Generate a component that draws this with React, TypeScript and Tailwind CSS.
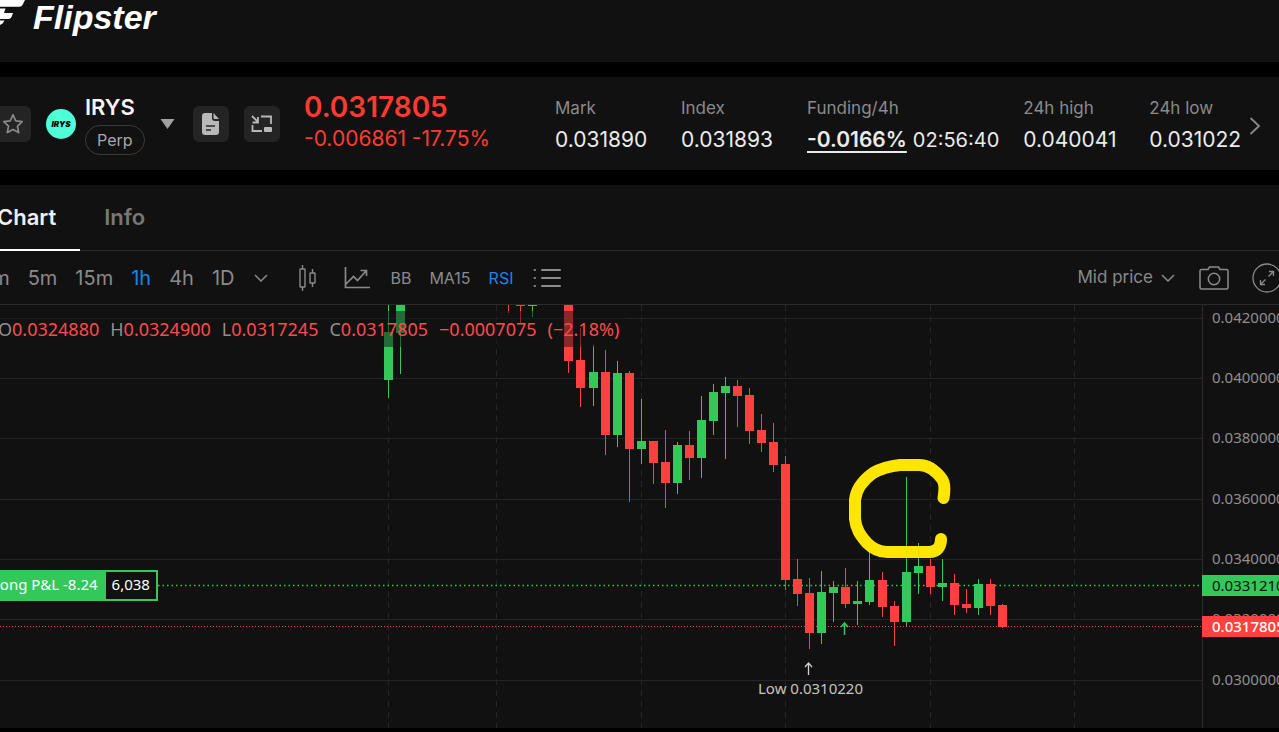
import React, { useState } from 'react'

type Candle = {
  x: number
  open: number
  close: number
  high: number
  low: number
  up: boolean
}

const GREEN = '#34c759'
const RED = '#ff4040'

// [x, body top, body bottom, wick top, wick bottom, up]
const rawCandles: [number, number, number, number, number, number][] = [
  [384, 27, 75, 0, 93, 1],
  [396, 0, 28, 0, 69, 1],
  [504, 0, 0, 0, 8, 0],
  [516, 0, 1, 0, 18, 0],
  [528, 0, 1, 0, 12, 1],
  [564, 0, 56, 0, 68, 0],
  [576, 55, 83, 23, 102, 0],
  [589, 67, 83, 40, 101, 1],
  [601, 67, 130, 45, 150, 0],
  [613, 68, 130, 56, 142, 1],
  [625, 68, 144, 66, 197, 0],
  [637, 136, 144, 94, 159, 1],
  [649, 136, 158, 136, 179, 0],
  [661, 157, 178, 125, 203, 0],
  [673, 140, 178, 137, 189, 1],
  [685, 140, 153, 126, 175, 0],
  [697, 115, 153, 91, 173, 1],
  [709, 87, 116, 79, 130, 1],
  [721, 81, 88, 72, 154, 1],
  [733, 81, 91, 75, 122, 0],
  [745, 90, 126, 83, 139, 0],
  [757, 125, 138, 109, 147, 0],
  [769, 137, 160, 118, 167, 0],
  [781, 159, 275, 151, 285, 0],
  [793, 274, 289, 254, 301, 0],
  [805, 288, 328, 273, 344, 0],
  [817, 287, 328, 266, 339, 1],
  [829, 282, 288, 276, 317, 1],
  [841, 282, 299, 263, 303, 0],
  [853, 296, 299, 276, 320, 1],
  [865, 275, 297, 247, 300, 1],
  [878, 275, 302, 267, 312, 0],
  [890, 301, 317, 296, 341, 0],
  [902, 267, 317, 172, 321, 1],
  [914, 261, 268, 238, 289, 1],
  [926, 261, 282, 254, 289, 0],
  [938, 278, 282, 254, 296, 1],
  [950, 278, 300, 269, 310, 0],
  [962, 299, 303, 284, 308, 0],
  [974, 279, 303, 274, 310, 1],
  [986, 279, 301, 274, 310, 0],
  [998, 300, 322, 299, 323, 0],
]

const candles: Candle[] = rawCandles.map(([x, open, close, high, low, up]) => ({
  x,
  open,
  close,
  high,
  low,
  up: up === 1,
}))

const priceLevels = [
  { y: 13, label: '0.0420000' },
  { y: 73, label: '0.0400000' },
  { y: 133, label: '0.0380000' },
  { y: 194, label: '0.0360000' },
  { y: 254, label: '0.0340000' },
  { y: 314, label: '0.0320000' },
  { y: 375, label: '0.0300000' },
]

const timeLines = [388, 496, 641, 785, 930, 1074]

const intervals = ['1m', '5m', '15m', '1h', '4h', '1D']

const ohlc = [
  { key: 'O', value: '0.0324880' },
  { key: 'H', value: '0.0324900' },
  { key: 'L', value: '0.0317245' },
  { key: 'C', value: '0.0317805' },
]

const Logo: React.FC = () => (
  <a href="#" aria-label="Flipster" className="flex items-start text-white">
    <svg width="26" height="28" viewBox="0 0 26 28" fill="currentColor" aria-hidden="true">
      <path d="M0 0H25L22.500 5Q21.500 6.700 19.500 6.700H0Z" />
      <path d="M0 8.500H5.500L4 13H13L11.500 17Q10.500 19 8.500 19H0Z" />
      <path d="M0 20.500H4.500L2.500 23.500L0 25Z" />
    </svg>
    <span className="pl-[7px] font-['Liberation_Sans',sans-serif] text-[34px] leading-[34px] font-bold italic">Flipster</span>
  </a>
)

const Stat: React.FC<{ label: string; children: React.ReactNode }> = ({ label, children }) => (
  <div className="min-w-[102px] shrink-0 pt-1">
    <dt className="text-[17px] leading-6 text-[#8a8a8a]">{label}</dt>
    <dd className="flex items-baseline gap-1.5 pt-1 text-[21px] leading-8 text-[#ebebeb]">{children}</dd>
  </div>
)

const ChevronDown: React.FC = () => (
  <svg width="14" height="8" viewBox="0 0 14 8" fill="none" stroke="currentColor" strokeWidth="1.500" aria-hidden="true">
    <path d="M1 1l6 6 6-6" />
  </svg>
)

const PairHeader: React.FC = () => (
  <section className="relative flex h-[93px] items-center overflow-hidden bg-[#111] pl-[46px]">
    <button aria-label="Favorite" className="absolute top-[29px] -left-[5px] flex size-9 items-center justify-center rounded-md bg-[#242424] text-[#8a8a8a]">
      <svg width="22" height="22" viewBox="0 0 22 22" fill="none" stroke="currentColor" strokeWidth="1.700" strokeLinejoin="round" aria-hidden="true">
        <path d="M11 1.800l2.800 6 6.400.8-4.700 4.500 1.200 6.500L11 16.400l-5.700 3.200 1.200-6.500L1.800 8.600l6.400-.8z" />
      </svg>
    </button>
    <span className="flex size-[30px] shrink-0 items-center justify-center rounded-full bg-[#4fffd5] text-[8px] font-black text-black italic">IRYS</span>
    <div className="ml-[9px] flex w-[67px] shrink-0 flex-col items-start">
      <h1 className="text-[22px] leading-7 font-semibold text-[#f5f5f5]">IRYS</h1>
      <span className="mt-1 rounded-full border border-[#3a3a3a] px-[11px] text-base leading-7 text-[#a8a8a8]">Perp</span>
    </div>
    <button aria-label="Select market" className="ml-2 text-[#a0a0a0]">
      <svg width="15" height="10" viewBox="0 0 15 10" fill="currentColor" aria-hidden="true">
        <path d="M0.500 0H14.500L7.500 10Z" />
      </svg>
    </button>
    <button aria-label="Contract details" className="ml-[18px] flex size-9 shrink-0 items-center justify-center rounded-md bg-[#242424] text-[#b8b8b8]">
      <svg width="18" height="22" viewBox="0 0 18 22" aria-hidden="true">
        <path d="M3 0h7v5q0 3 3 3h4v11q0 3-3 3H3q-3 0-3-3V3Q0 0 3 0z" fill="currentColor" />
        <path d="M11.500 0L17 6h-4q-1.500 0-1.500-1.500z" fill="currentColor" />
        <path d="M4 13h9M4 17h5" stroke="#242424" strokeWidth="1.500" />
      </svg>
    </button>
    <button aria-label="Picture in picture" className="ml-[15px] flex size-9 shrink-0 items-center justify-center rounded-md bg-[#242424] text-[#b8b8b8]">
      <svg width="22" height="18" viewBox="0 0 22 18" fill="none" stroke="currentColor" strokeWidth="1.800" aria-hidden="true">
        <path d="M10 1.500H20V9M1.500 10v6H11M1 1l6 6M7 2v5.500H1.500" />
        <rect x="13" y="12" width="8" height="5" rx="1" fill="currentColor" stroke="none" />
      </svg>
    </button>
    <div className="ml-6 w-[251px] shrink-0 text-[#ff3b30]">
      <div className="text-[28px] leading-8 font-semibold">0.0317805</div>
      <div className="pb-px text-[21px] leading-8">-0.006861 -17.75%</div>
    </div>
    <dl className="flex min-w-0 grow gap-6">
      <Stat label="Mark">0.031890</Stat>
      <Stat label="Index">0.031893</Stat>
      <Stat label="Funding/4h">
        <span className="font-semibold underline decoration-2 underline-offset-4">-0.0166%</span>
        <span className="text-xl leading-8">02:56:40</span>
      </Stat>
      <Stat label="24h high">0.040041</Stat>
      <Stat label="24h low">0.031022</Stat>
    </dl>
    <button aria-label="More stats" className="absolute top-10 right-[18px] text-[#8a8a8a]">
      <svg width="12" height="18" viewBox="0 0 12 18" fill="none" stroke="currentColor" strokeWidth="1.800" aria-hidden="true">
        <path d="M1.500 1l8.500 8-8.500 8" />
      </svg>
    </button>
  </section>
)

const Toolbar: React.FC = () => {
  const [interval, setSelected] = useState('1h')

  return (
    <div className="flex h-[54px] items-center overflow-hidden border-b border-[#2a2a2a] text-[#8a8a8a]">
      <div className="-ml-4 flex shrink-0 gap-[18px] text-xl">
        {intervals.map((item) => (
          <button key={item} onClick={() => setSelected(item)} className={item === interval ? 'text-[#1a84f0]' : 'text-[#8a8a8a]'}>
            {item}
          </button>
        ))}
      </div>
      <button aria-label="More intervals" className="ml-5">
        <ChevronDown />
      </button>
      <button aria-label="Chart type" className="ml-[30px]">
        <svg width="18" height="26" viewBox="0 0 18 26" fill="none" stroke="currentColor" strokeWidth="1.400" aria-hidden="true">
          <path d="M4.500 0v4M4.500 22v4M14.500 4v4M14.500 18v4" />
          <rect x="2" y="4" width="5" height="18" rx="0.500" />
          <rect x="12" y="8" width="5" height="10" rx="0.500" />
        </svg>
      </button>
      <button aria-label="Indicators" className="ml-7">
        <svg width="26" height="22" viewBox="0 0 26 22" fill="none" stroke="currentColor" strokeWidth="1.700" aria-hidden="true">
          <path d="M1.500 0v20.500H26M2 17l7.500-7.500 4 4L22 4M16.500 3.500H22.500V9" />
        </svg>
      </button>
      <div className="ml-5 flex shrink-0 gap-[18px] text-base">
        <button>BB</button>
        <button>MA15</button>
        <button className="text-[#1a84f0]">RSI</button>
      </div>
      <button aria-label="Indicator list" className="ml-5">
        <svg width="28" height="20" viewBox="0 0 28 20" fill="none" stroke="currentColor" strokeWidth="2" strokeLinecap="round" aria-hidden="true">
          <path d="M9 2h18M9 10h18M9 18h18M1.500 2h.5M1.500 10h.5M1.500 18h.5" />
        </svg>
      </button>
      <button className="ml-auto flex shrink-0 items-center gap-2 text-[17px]">
        Mid price
        <ChevronDown />
      </button>
      <button aria-label="Screenshot" className="ml-6 shrink-0">
        <svg width="30" height="24" viewBox="0 0 30 24" fill="none" stroke="currentColor" strokeWidth="1.500" aria-hidden="true">
          <path d="M2.500 3.500H9L10.500 1H19.500L21 3.500H27.500Q29 3.500 29 5V21.500Q29 23 27.500 23H2.500Q1 23 1 21.500V5Q1 3.500 2.500 3.500Z" />
          <circle cx="15" cy="13" r="5.700" />
        </svg>
      </button>
      <button aria-label="Fullscreen" className="-mr-[3px] ml-[23px] shrink-0">
        <svg width="30" height="30" viewBox="0 0 30 30" fill="none" stroke="currentColor" strokeWidth="1.300" aria-hidden="true">
          <circle cx="15" cy="15" r="14" />
          <path d="M16.500 13.500L21.500 8.500M17 8.500h4.500V13M13.500 16.500L8.500 21.500M8.500 17v4.500H13" />
        </svg>
      </button>
    </div>
  )
}

const CandleChart: React.FC = () => (
  <svg width="100%" height="423" className="block" role="img" aria-label="IRYS 1h candles">
    <g stroke="#242424">
      {priceLevels.map((level) => (
        <line key={level.y} x1="0" x2="100%" y1={level.y + 0.5} y2={level.y + 0.5} />
      ))}
    </g>
    <g stroke="#252525" strokeDasharray="6 5">
      {timeLines.map((x) => (
        <line key={x} x1={x + 0.5} x2={x + 0.5} y1="0" y2="100%" />
      ))}
    </g>
    <line x1="158" x2="100%" y1="280.500" y2="280.500" stroke={GREEN} strokeWidth="1.500" strokeDasharray="1.500 3" />
    <line x1="0" x2="100%" y1="321.500" y2="321.500" stroke="#d9484e" strokeDasharray="1 2" />
    <g shapeRendering="crispEdges">
      {candles.map((c) => (
        <g key={c.x} fill={c.up ? GREEN : RED}>
          <rect x={c.x + 4} y={c.high} width="1" height={c.low - c.high} />
          <rect x={c.x} y={c.open} width="9" height={c.close - c.open} />
        </g>
      ))}
    </g>
    <rect x="0" y="6" width="626" height="36" fill="#111" opacity="0.500" />
    <path d="M844.500 330v-11M841 322l3.500-4 3.500 4" fill="none" stroke={GREEN} strokeWidth="1.500" />
    <path d="M808.500 370v-12M805 362l3.500-4 3.500 4" fill="none" stroke="#d0d0d0" strokeWidth="1.300" />
    <path
      d="M943.500 193C945 184 945 178 942 174C936 166 928 160 919 160H900C890 161 882 163 873 168C862 176 856 184 855 195V214C856 224 860 230 867 238C873 244 879 247 887 247H930Q941 246 941 234"
      fill="none"
      stroke="#ffe600"
      strokeWidth="12"
      strokeLinecap="round"
      strokeLinejoin="round"
    />
  </svg>
)

const ChartPane: React.FC = () => (
  <div className="flex overflow-hidden font-['Noto_Sans','Open_Sans',sans-serif]">
    <div className="relative min-w-0 grow">
      <CandleChart />
      <div className="absolute top-3 -left-0.5 flex gap-[11px] text-lg leading-6 whitespace-nowrap text-[#ff4a4a]">
        {ohlc.map((item) => (
          <span key={item.key}>
            <span className="text-[#8f8f8f]">{item.key}</span>
            {item.value}
          </span>
        ))}
        <span>−0.0007075</span>
        <span>(−2.18%)</span>
      </div>
      <div className="absolute top-[265px] left-0 flex border-2 border-l-0 border-[#34c759] bg-[#111] text-[15px] leading-[25px] text-white">
        <span className="-ml-2 bg-[#34c759] pr-2 pb-0.5">Long P&amp;L -8.24</span>
        <span className="px-1.5 pb-0.5">6,038</span>
      </div>
      <span className="absolute top-[373px] left-[758px] text-[15px] leading-5 whitespace-nowrap text-[#c4c4c4]">Low 0.0310220</span>
    </div>
    <div className="relative w-[77px] shrink-0 border-l border-[#2c2c2c] text-[15px] leading-5 text-[#8f8f8f]">
      {priceLevels.map((level) => (
        <span key={level.label} className="absolute left-[9px] -translate-y-1/2" style={{ top: level.y - 1 }}>
          {level.label}
        </span>
      ))}
      <span className="absolute top-[270px] -left-px bg-[#34c759] pl-2.5 leading-[21px] text-[#111]">0.0331210</span>
      <span className="absolute top-[311px] -left-px bg-[#ff4040] pl-2.5 leading-[21px] font-medium text-white">0.0317805</span>
    </div>
  </div>
)

const App: React.FC = () => {
  const [tab, setTab] = useState('Chart')

  return (
    <div className="min-h-screen overflow-hidden bg-black font-[Inter,sans-serif]">
      <header className="h-[62px] bg-[#111]">
        <Logo />
      </header>
      <main className="mt-[15px] space-y-[15px]">
        <PairHeader />
        <section className="bg-[#111]">
          <nav className="flex h-[66px] border-b border-[#2a2a2a] text-[22px] font-semibold">
            {['Chart', 'Info'].map((item) => (
              <button
                key={item}
                onClick={() => setTab(item)}
                className={item === tab ? '-mb-px -ml-[3px] border-b-2 border-white pr-6 text-[#f0f0f0]' : 'px-6 text-[#777]'}
              >
                {item}
              </button>
            ))}
          </nav>
          <Toolbar />
          <ChartPane />
        </section>
      </main>
    </div>
  )
}

export default App
